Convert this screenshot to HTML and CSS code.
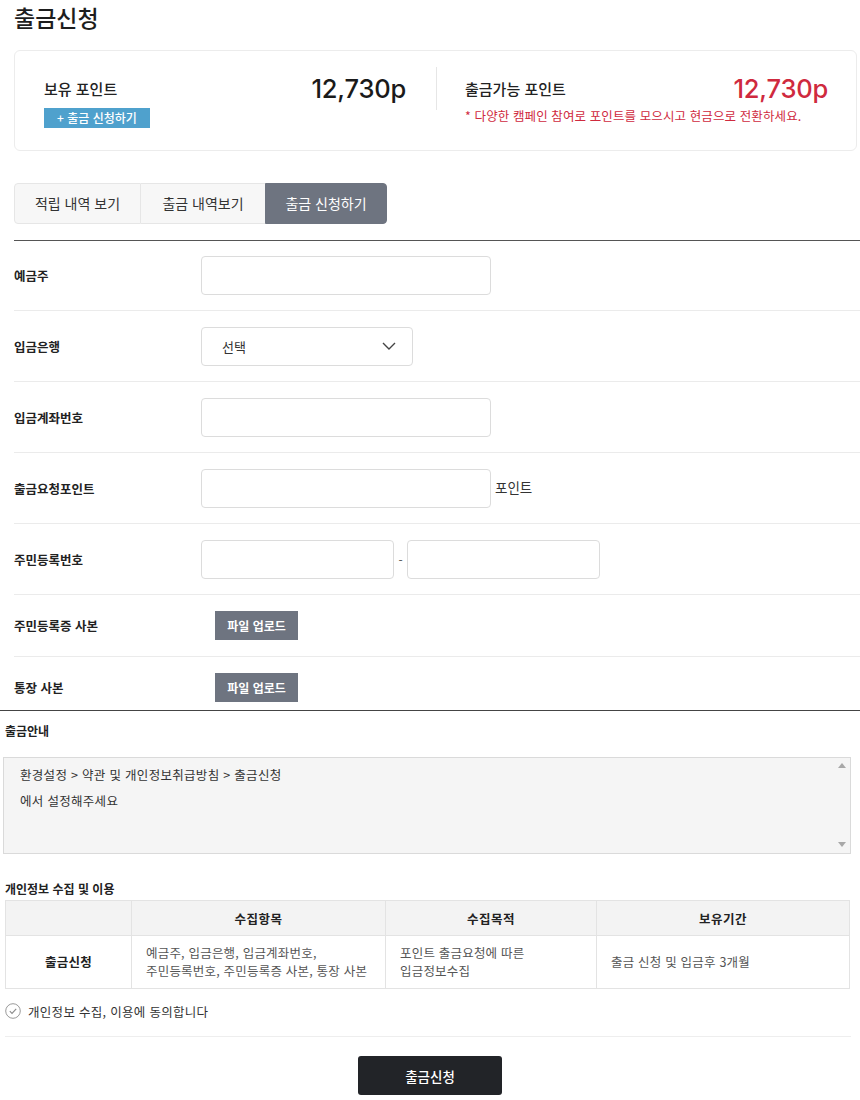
FILE: index.html
```html
<!DOCTYPE html>
<html lang="ko">
<head>
<meta charset="utf-8">
<title>출금신청</title>
<link rel="stylesheet" href="styles.css">
</head>
<body>
<div class="page">
  <h1 class="title">출금신청</h1>

  <div class="summary">
    <div class="sum-col sum-left">
      <div class="sum-row">
        <span class="sum-label">보유 포인트</span>
        <span class="sum-num">12,730p</span>
      </div>
      <button class="btn-blue">+ 출금 신청하기</button>
    </div>
    <div class="sum-divider"></div>
    <div class="sum-col sum-right">
      <div class="sum-row">
        <span class="sum-label">출금가능 포인트</span>
        <span class="sum-num red">12,730p</span>
      </div>
      <p class="sum-note">* 다양한 캠페인 참여로 포인트를 모으시고 현금으로 전환하세요.</p>
    </div>
  </div>

  <div class="tabs">
    <div class="tab t1">적립 내역 보기</div>
    <div class="tab t2">출금 내역보기</div>
    <div class="tab t3 active">출금 신청하기</div>
  </div>

  <div class="form">
    <div class="row">
      <div class="label">예금주</div>
      <div class="field"><div class="input w290"></div></div>
    </div>
    <div class="row">
      <div class="label">입금은행</div>
      <div class="field">
        <div class="input select">
          <span>선택</span>
          <svg width="14" height="8" viewBox="0 0 14 8"><path d="M1 1l6 6 6-6" fill="none" stroke="#444" stroke-width="1.4"/></svg>
        </div>
      </div>
    </div>
    <div class="row">
      <div class="label">입금계좌번호</div>
      <div class="field"><div class="input w290"></div></div>
    </div>
    <div class="row">
      <div class="label">출금요청포인트</div>
      <div class="field"><div class="input w290"></div><span class="unit">포인트</span></div>
    </div>
    <div class="row">
      <div class="label">주민등록번호</div>
      <div class="field"><div class="input w193"></div><span class="dash">-</span><div class="input w193"></div></div>
    </div>
    <div class="row file">
      <div class="label">주민등록증 사본</div>
      <div class="field"><button class="btn-gray">파일 업로드</button></div>
    </div>
    <div class="row file last">
      <div class="label">통장 사본</div>
      <div class="field"><button class="btn-gray">파일 업로드</button></div>
    </div>
  </div>
</div>

<div class="bottom">
  <h2 class="sec-title">출금안내</h2>
  <div class="notice">
    <div class="notice-text">
      <p>환경설정 &gt; 약관 및 개인정보취급방침 &gt; 출금신청</p>
      <p>에서 설정해주세요</p>
    </div>
    <div class="scroll">
      <span class="arr up"></span>
      <span class="arr down"></span>
    </div>
  </div>

  <h2 class="sec-title sec2">개인정보 수집 및 이용</h2>
  <table class="privacy">
    <thead>
      <tr>
        <th class="c1"></th>
        <th class="c2">수집항목</th>
        <th class="c3">수집목적</th>
        <th class="c4">보유기간</th>
      </tr>
    </thead>
    <tbody>
      <tr>
        <td class="head">출금신청</td>
        <td>예금주, 입금은행, 입금계좌번호,<br>주민등록번호, 주민등록증 사본, 통장 사본</td>
        <td>포인트 출금요청에 따른<br>입금정보수집</td>
        <td>출금 신청 및 입금후 3개월</td>
      </tr>
    </tbody>
  </table>

  <div class="agree">
    <svg width="16" height="16" viewBox="0 0 16 16"><circle cx="8" cy="8" r="7.3" fill="#fff" stroke="#9a9a9a" stroke-width="1"/><path d="M4.8 8.2l2.2 2.2 4.2-4.6" fill="none" stroke="#8a8a8a" stroke-width="1.1"/></svg>
    <span>개인정보 수집, 이용에 동의합니다</span>
  </div>

  <div class="submit-wrap">
    <button class="btn-submit">출금신청</button>
  </div>
</div>
</body>
</html>
```

FILE: styles.css
```css
* { box-sizing: border-box; }
html, body { margin: 0; padding: 0; background: #fff; }
body {
  width: 860px;
  font-family: "Noto Sans CJK KR", "Noto Sans", sans-serif;
  color: #222;
}
p { margin: 0; }
button { font-family: inherit; border: 0; cursor: pointer; }

.page { padding: 0 0 0 14px; }

.title {
  margin: 0;
  padding-top: 2px;
  height: 50px;
  font-size: 23px;
  line-height: 30px;
  font-weight: 500;
  color: #1d1d1d;
}

/* summary card */
.summary {
  width: 843px;
  height: 101px;
  border: 1px solid #ececec;
  border-radius: 6px;
  display: flex;
  align-items: flex-start;
  padding: 19px 28px 0 29px;
}
.sum-col { display: flex; flex-direction: column; }
.sum-left { width: 363px; }
.sum-right { width: 364px; }
.sum-row {
  display: flex;
  justify-content: space-between;
  align-items: center;
  height: 36px;
}
.sum-label {
  font-size: 15px;
  font-weight: 500;
  color: #222;
}
.sum-num {
  font-family: "Inter", "Noto Sans", sans-serif;
  font-size: 25.5px;
  font-weight: 500;
  letter-spacing: -0.2px;
  color: #1a1a1a;
}
.sum-num.red { color: #cf2a3e; }
.sum-divider {
  width: 1px;
  height: 43px;
  background: #e6e6e6;
  margin: -3px 28px 0 30px;
  align-self: flex-start;
}
.btn-blue {
  margin-top: 2px;
  width: 106px;
  height: 20px;
  background: #4fa1cd;
  color: #fff;
  font-size: 12px;
  line-height: 20px;
  padding: 0;
  text-align: center;
  font-weight: 500;
}
.sum-note {
  margin-top: 2px;
  font-size: 12.5px;
  line-height: 16px;
  color: #cf2a3e;
  letter-spacing: 0.1px;
  white-space: nowrap;
}

/* tabs */
.tabs {
  display: flex;
  margin-top: 32px;
  height: 41px;
}
.tab {
  height: 41px;
  line-height: 39px;
  text-align: center;
  font-size: 14px;
  color: #333;
  background: #f7f7f7;
  border: 1px solid #e6e6e6;
}
.t1 { width: 127px; border-radius: 4px 0 0 4px; }
.t2 { width: 124px; border-left: 0; border-right: 0; }
.t3 { width: 122px; }
.tab.active {
  background: #6e7480;
  border-color: #6e7480;
  color: #fff;
  border-radius: 0 4px 4px 0;
}

/* form */
.form {
  margin-top: 16px;
  border-top: 1px solid #555;
}
.row {
  display: flex;
  align-items: center;
  height: 71px;
  border-bottom: 1px solid #ebebeb;
}
.row:first-child { height: 70px; }
.row.file { height: 62px; }
.row.file.last { height: 53px; border-bottom: 0; padding-top: 7px; }
.label {
  width: 187px;
  font-size: 12.5px;
  font-weight: 700;
  color: #222;
}
.field { display: flex; align-items: center; }
.input {
  height: 39px;
  border: 1px solid #dcdcdc;
  border-radius: 4px;
  background: #fff;
}
.w290 { width: 290px; }
.w193 { width: 193px; }
.select {
  width: 212px;
  display: flex;
  align-items: center;
  justify-content: space-between;
  padding: 0 16px 0 20px;
  font-size: 13px;
  color: #333;
}
.unit { margin-left: 4px; font-size: 13.5px; color: #333; margin-top: -2px; }
.dash { width: 13px; text-align: center; font-size: 12px; color: #555; }
.btn-gray {
  margin-left: 14px;
  width: 83px;
  height: 29px;
  background: #6e7480;
  color: #fff;
  font-size: 12px;
  font-weight: 700;
  padding: 0;
}

/* bottom */
.bottom {
  border-top: 1px solid #444;
  padding: 0 9px 0 5px;
}
.sec-title {
  margin: 0;
  padding-top: 13px;
  height: 46px;
  font-size: 12px;
  line-height: 14px;
  font-weight: 700;
  color: #222;
}
.notice {
  display: flex;
  height: 97px;
  margin-left: -2px;
  border: 1px solid #dadada;
  background: #f5f5f5;
}
.notice-text {
  flex: 1;
  padding: 4px 0 0 16px;
  font-size: 12.5px;
  line-height: 26px;
  letter-spacing: 0.3px;
  color: #333;
}
.scroll {
  width: 18px;
  position: relative;
}
.arr {
  position: absolute;
  left: 6px;
  width: 0; height: 0;
  border-left: 4px solid transparent;
  border-right: 4px solid transparent;
}
.arr.up { top: 5px; border-bottom: 5px solid #a8a8a8; }
.arr.down { bottom: 6px; border-top: 5px solid #a8a8a8; }

.sec2 { padding-top: 28px; height: 46px; }

.privacy {
  width: 845px;
  border-collapse: collapse;
  table-layout: fixed;
  font-size: 12.5px;
  color: #333;
}
.privacy th, .privacy td {
  border: 1px solid #e3e3e3;
}
.privacy th {
  height: 35px;
  background: #f3f3f3;
  font-weight: 700;
  font-size: 12.5px;
  letter-spacing: 0.5px;
  text-align: center;
  color: #222;
}
.c1 { width: 126px; }
.c2 { width: 254px; }
.c3 { width: 211px; }
.privacy td {
  height: 53px;
  padding: 0 0 0 14px;
  line-height: 18px;
  letter-spacing: 0.2px;
  white-space: nowrap;
  color: #555;
}
.privacy td.head {
  padding: 0;
  text-align: center;
  font-weight: 700;
  color: #222;
}

.agree {
  display: flex;
  align-items: center;
  gap: 7px;
  margin-top: 14px;
  height: 16px;
  font-size: 12.5px;
  letter-spacing: 0.3px;
  color: #333;
}
.submit-wrap {
  margin-top: 17px;
  border-top: 1px solid #eeeeee;
  padding-top: 19px;
  display: flex;
  justify-content: center;
  padding-left: 4px;
}
.btn-submit {
  width: 144px;
  height: 39px;
  background: #222428;
  color: #fff;
  border-radius: 3px;
  font-size: 13.5px;
  font-weight: 500;
}
```
